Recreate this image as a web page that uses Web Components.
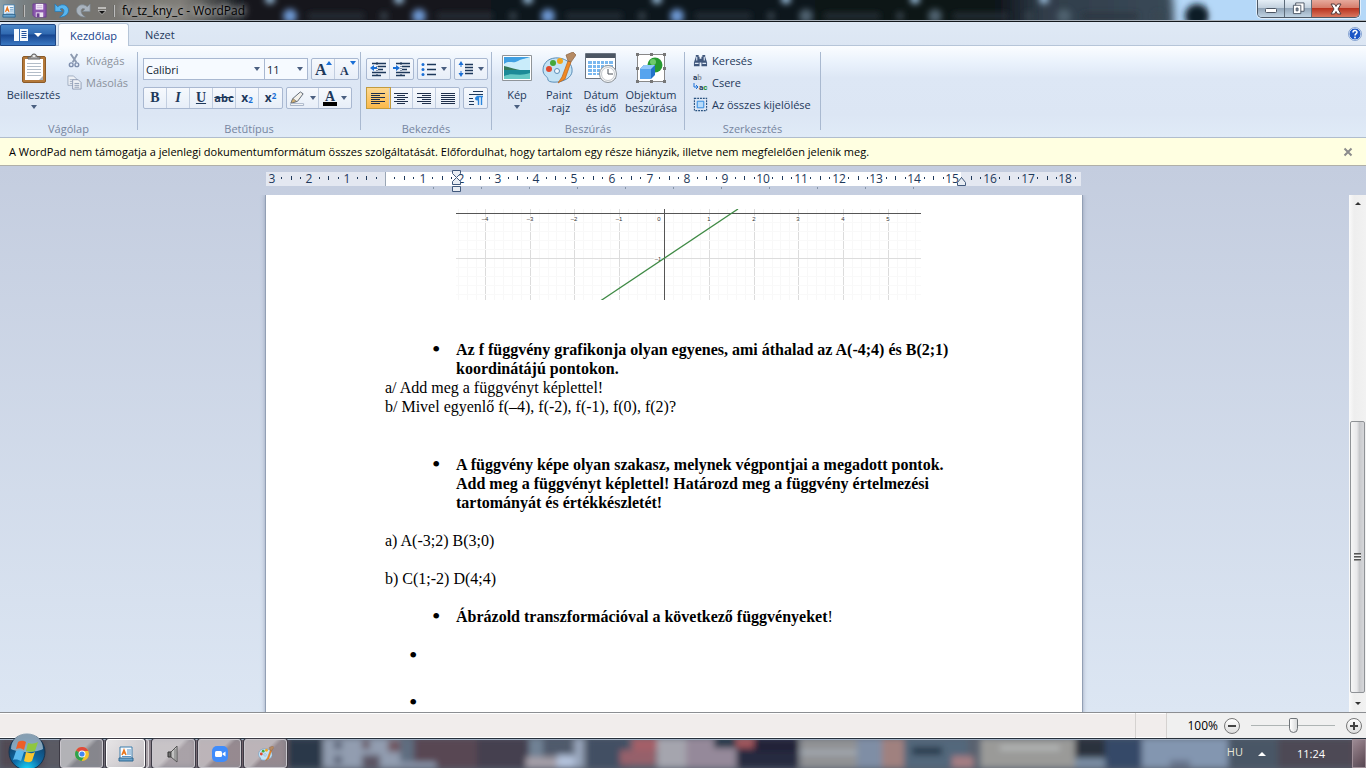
<!DOCTYPE html>
<html lang="hu">
<head>
<meta charset="utf-8">
<title>fv_tz_kny_c - WordPad</title>
<style>
html, body {
	margin: 0;
	height: 100%;
}

body {
	display: flex;
	flex-direction: column;
	overflow: hidden;
	font: 11px/13px "Open Sans", "Noto Sans", sans-serif;
	color: #1e395b;
}

wp-workspace {
	flex: 1;
	min-height: 0;
}

wp-page p, wp-page ul { margin: 0; }
wp-page ul { list-style: none; padding: 0; }
wp-page .spaced { margin-top: 19px; }
wp-page .far { margin-top: 39px; }
wp-page .outer { margin-top: 20px; }
wp-page li {
	display: grid;
	grid-template-columns: 24px 1fr;
	min-height: 19px;
	padding-left: 47px;
}
wp-page li > b { grid-column: 2; }
wp-page li::before { content: "•"; font-size: 24px; grid-row: 1; }
wp-page .spaced li { grid-template-columns: 24px auto 1fr; }
wp-page .outer li { padding-left: 24px; margin-bottom: 28px; }
</style>
</head>
<body>
<wp-titlebar>fv_tz_kny_c - WordPad</wp-titlebar>
<wp-tabs></wp-tabs>
<wp-ribbon></wp-ribbon>
<wp-notice>A WordPad nem támogatja a jelenlegi dokumentumformátum összes szolgáltatását. Előfordulhat, hogy tartalom egy része hiányzik, illetve nem megfelelően jelenik meg.</wp-notice>
<wp-workspace>
	<wp-page>
		<wp-graph></wp-graph>
		<ul>
			<li><b>Az f függvény grafikonja olyan egyenes, ami áthalad az A(-4;4) és B(2;1) koordinátájú pontokon.</b></li>
		</ul>
		<p>a/ Add meg a függvényt képlettel!</p>
		<p>b/ Mivel egyenlő f(–4), f(-2), f(-1), f(0), f(2)?</p>
		<ul class="far">
			<li><b>A függvény képe olyan szakasz, melynek végpontjai a megadott pontok. Add meg a függvényt képlettel! Határozd meg a függvény értelmezési tartományát és értékkészletét!</b></li>
		</ul>
		<p class="spaced">a) A(-3;2) B(3;0)</p>
		<p class="spaced">b) C(1;-2) D(4;4)</p>
		<ul class="spaced">
			<li><b>Ábrázold transzformációval a következő függvényeket</b>!</li>
		</ul>
		<ul class="outer">
			<li></li>
			<li></li>
		</ul>
	</wp-page>
</wp-workspace>
<wp-statusbar></wp-statusbar>
<wp-taskbar></wp-taskbar>

<script>
const icons = {
	app: [16, 16, `<path d="M2 1h12v12H2z" fill="#f7fbff" stroke="#3d7cab"/><path d="M1 12h14v3H1z" fill="#6aa3cc" stroke="#2e6690"/><path d="M4 9l2-5 2 5M5 7h2" fill="none" stroke="#e8771f" stroke-width="1.5"/><path d="M9 4h4M9 6h4M9 8h4M4 10.500h9" stroke="#5a93c4"/>`],
	save: [16, 16, `<path d="M1 1h14v14H3l-2-2z" fill="#8a57ad" stroke="#6d3f92"/><path d="M4 1h8v6H4z" fill="#f6effa"/><path d="M5 3h6M5 5h6" stroke="#c7add8"/><path d="M4 10h8v5H4z" fill="#e9e2ef"/><path d="M5 11h3v4H5z" fill="#6d3f92"/>`],
	undo: [16, 16, `<path d="M1 1v8h8L6.500 6.500C9 5 11 6.500 10.500 9.500 10 12 8 13.500 6 15c6 0 9.500-3 9.500-7.500C15 2 8.500 0 4 4z" fill="#57b5ef" stroke="#2478b4" stroke-width=".8"/>`],
	redo: [16, 16, `<path d="M15 1v8H7l2.500-2.500C7 5 5 6.500 5.500 9.500 6 12 8 13.500 10 15 4 15 .500 12 .500 7.500 1 2 7.500 0 12 4z" fill="#a9b3bd" stroke="#7e8891" stroke-width=".8"/>`],
	more: [8, 8, `<path d="M0 1h8" stroke="#fff"/><path d="M0 3.500h8L4 7.500z" fill="#111" stroke="#eee" stroke-width=".6"/>`],
	arrow: [6, 4, `<path d="M0 0h6L3 4z" fill="#4a5f80"/>`],
	menu: [14, 12, `<path d="M0 0h14v12H0z" fill="#f6fafe"/><path d="M5.500 0v12" stroke="#356aab"/><path d="M7.500 2.500h5M7.500 4.500h5M7.500 6.500h5M7.500 8.500h5" stroke="#23519a"/>`],
	paste: [26, 30, `<rect x="1.500" y="3.500" width="23" height="26" rx="1.500" fill="#b4793a" stroke="#8a5a28"/><path d="M4 6h18v21H4z" fill="#fff"/><path d="M6 10.500h14M6 13.500h14M6 16.500h14M6 19.500h14M6 22.500h14" stroke="#b3bdc8"/><path d="M18 27l4-4v4z" fill="#aab4c0"/><path d="M7 6V4h3c0-4 6-4 6 0h3v2z" fill="#aaa" stroke="#606060"/><circle cx="13" cy="3" r="1" fill="#fff"/>`],
	cut: [16, 16, `<path d="M4 1l6 9M11 1l-5 9" stroke="#8e9bb1" stroke-width="2" fill="none"/><circle cx="4.500" cy="12.500" r="2" fill="none" stroke="#7e8ead" stroke-width="1.500"/><circle cx="10.500" cy="12.500" r="2" fill="none" stroke="#7e8ead" stroke-width="1.500"/>`],
	copy: [16, 16, `<path d="M1 1h6l3 3v7H1z" fill="#eef1f6" stroke="#a1adc1"/><path d="M3 5h4M3 7h3M3 9h3" stroke="#a1adc1"/><path d="M6 5h6l3 3v7H6z" fill="#eef1f6" stroke="#8e9bb3"/><path d="M8 9h5M8 11h5M8 13h5" stroke="#8e9bb3"/>`],
	indentLess: [18, 16, `<path d="M3 2.500h14M9 5.500h8M9 8.500h5M3 11.500h14M3 14.500h9" stroke="#1e395b" stroke-width="1.400"/><path d="M8 1v14" stroke="#1e395b" stroke-dasharray="1 1"/><path d="M1 7l4-3v2h3v2H5v2z" fill="#1a6fd6"/>`],
	indentMore: [18, 16, `<path d="M3 2.500h14M9 5.500h8M9 8.500h5M3 11.500h14M3 14.500h9" stroke="#1e395b" stroke-width="1.400"/><path d="M8 1v14" stroke="#1e395b" stroke-dasharray="1 1"/><path d="M7 7L3 4v2H0v2h3v2z" fill="#1a6fd6"/>`],
	bullets: [16, 16, `<path d="M6 3.500h9M6 8.500h9M6 13.500h9" stroke="#1e395b" stroke-width="1.300"/><circle cx="2" cy="3.500" r="1.500" fill="#1a6fd6"/><circle cx="2" cy="8.500" r="1.500" fill="#1a6fd6"/><circle cx="2" cy="13.500" r="1.500" fill="#1a6fd6"/>`],
	spacing: [16, 16, `<path d="M7 3.500h8M7 6.500h8M7 9.500h8M7 12.500h8" stroke="#1e395b" stroke-width="1.300"/><path d="M3 0l2.500 4h-2v2h-1V4h-2zM3 16l2.500-4h-2v-2h-1v2h-2z" fill="#1a6fd6"/>`],
	left: [16, 16, `<path d="M1 3.500h14M1 5.500h9M1 7.500h14M1 9.500h9M1 11.500h14M1 13.500h9" stroke="#1e2f4b"/>`],
	center: [16, 16, `<path d="M1 3.500h14M4 5.500h8M1 7.500h14M4 9.500h8M1 11.500h14M4 13.500h8" stroke="#1e2f4b"/>`],
	right: [16, 16, `<path d="M1 3.500h14M6 5.500h9M1 7.500h14M6 9.500h9M1 11.500h14M6 13.500h9" stroke="#1e2f4b"/>`],
	justify: [16, 16, `<path d="M1 3.500h14M1 5.500h14M1 7.500h14M1 9.500h14M1 11.500h14M1 13.500h14" stroke="#1e2f4b"/>`],
	para: [16, 16, `<path d="M5 1.500h10M1 4.500h14M1 8.500h4M1 11.500h5M1 14.500h5" stroke="#1e395b" stroke-width="1.200"/><path d="M10 6.500H9a2 2 0 0 0 0 4h1z" fill="#2b86dd"/><path d="M15 6.500H8.500M10.500 6v9M13.500 6v9" fill="none" stroke="#2b86dd" stroke-width="1.400"/>`],
	pen: [18, 16, `<path d="M2 13l2-5 8-7 3 2-6 8z" fill="#f4f2ec" stroke="#5b6470"/><path d="M2 13l2-5 4 3z" fill="#d9b370" stroke="#5b6470" stroke-width=".6"/><path d="M1.500 13.500h14v2h-14z" fill="#fff" stroke="#a3b0c4"/>`],
	picture: [30, 26, `<path d="M.500.500h29v25H.500z" fill="#fff" stroke="#8f9499"/><path d="M2 2h26v22H2z" fill="#3f9fe2"/><path d="M2 9c5-4 9 0 14-3s8-2 12-4v13H2z" fill="#c9ecfa"/><path d="M2 11c5 1 9 3 16 4H2z" fill="#34785a"/><path d="M2 15h26v9H2z" fill="#1c8a97"/><path d="M2 21c8-4 15 1 26-3v6H2z" fill="#66c8c4"/>`],
	paint: [34, 32, `<path d="M17 6C8 5 1 10 1 18c0 6 5 6 5 10 1 4 22 3 24-8 1-8-5-13-13-14z" fill="#c4e3f5" stroke="#5b8eb8"/><circle cx="7" cy="17" r="3" fill="#e0492d"/><circle cx="11" cy="11" r="3" fill="#46a83a"/><circle cx="18" cy="9" r="3" fill="#f2a51c"/><circle cx="15" cy="19" r="2.500" fill="#f1f8fd" stroke="#5b8eb8"/><path d="M16 31l4-6 6-16 3 1-6 17z" fill="#f08a24" stroke="#b8611a" stroke-width=".7"/><path d="M26 9l-2-6 7-3 3 3-5 7z" fill="#b58a63" stroke="#8b6340" stroke-width=".7"/>`],
	date: [32, 32, `<path d="M.500 1.500h30v25H.500z" fill="#fff" stroke="#6b7480"/><path d="M1 2h29v4H1z" fill="#4c5663"/><path d="M3 9h25v14H3z" fill="#7ab8ef"/><path d="M7.500 8v16M11.500 8v16M15.500 8v16M19.500 8v16M23.500 8v16M3 12.500h25M3 16.500h25M3 20.500h25" stroke="#fff"/><circle cx="23" cy="22" r="8.500" fill="#f3f4f5" stroke="#8e949a"/><circle cx="23" cy="22" r="6.500" fill="#fff" stroke="#c5c9cd"/><path d="M23 17v5h5" fill="none" stroke="#4a5058"/>`],
	object: [30, 30, `<path d="M1.500 1.500h27v27h-27z" fill="#fff" stroke="#888"/><circle cx="19" cy="12" r="7.500" fill="#279a31"/><circle cx="17" cy="9" r="3" fill="#6fcb6c"/><path d="M4 16l4-4h11v10l-4 4H4z" fill="#2473c9"/><path d="M4 16h11v10H4z" fill="#57a4ee"/><path d="M4 16l4-4h11l-4 4z" fill="#93c8fa"/><path d="M0 0h3v3H0zM14 0h3v3h-3zM27 0h3v3h-3zM0 14h3v3H0zM27 14h3v3h-3zM0 27h3v3H0zM14 27h3v3h-3zM27 27h3v3h-3z" fill="#777"/>`],
	find: [16, 16, `<path d="M3 2h3v2h1v2h2V4h1V2h3v2l2 6v4H9v-4H7v4H1v-4l2-6z" fill="#40577c"/><path d="M2 11h4M10 11h4M4 4v4M12 4v4" stroke="#dbe6f4" stroke-width="1.200"/>`],
	selectAll: [16, 16, `<path d="M1.500 1.500h13v13h-13z" fill="none" stroke="#27517f" stroke-width="1.200" stroke-dasharray="2 1"/><path d="M4.500 4.500h7v7h-7z" fill="#b7dbfa" stroke="#2a86de"/>`],
	help: [14, 14, `<circle cx="7" cy="7" r="6" fill="#1c56c6" stroke="#e9f2fc"/><circle cx="7" cy="7" r="6.500" fill="none" stroke="#4b76b8" stroke-width=".6"/><path d="M5 5.500C5 3 9 3 9 5.300 9 6.700 7 6.700 7 8.500" fill="none" stroke="#fff" stroke-width="1.500"/><circle cx="7" cy="10.500" r=".9" fill="#fff"/>`],
	close: [10, 10, `<path d="M1.500 1.500l7 7M8.500 1.500l-7 7" stroke="#8c8c8c" stroke-width="2"/>`],
	minimise: [14, 10, `<rect x="1.500" y="4.500" width="11" height="4" rx="1" fill="#fff" stroke="#4b5563"/>`],
	restore: [14, 14, `<path d="M4 1h9v9H4z" fill="#fff" stroke="#4b5563"/><path d="M1.500 3.500h8v9h-8z" fill="#fff" stroke="#4b5563"/><path d="M4.500 6.500h2v3h-2z" fill="#8a99a8" stroke="#4b5563"/>`],
	quit: [14, 12, `<path d="M2 1h3.500L7 3.500 8.500 1H12L9 6l3 5H8.500L7 8.500 5.500 11H2l3-5z" fill="#fff" stroke="#543b3d"/>`],
	orb: [38, 38, `<defs><radialGradient id="o" cx=".5" cy="1" r=".9"><stop offset="0" stop-color="#19dcff"/><stop offset=".45" stop-color="#0f6aa6"/><stop offset="1" stop-color="#123a5e"/></radialGradient></defs><circle cx="19" cy="19" r="18" fill="url(#o)" stroke="#16334f"/><path d="M3 16A16 16 0 0 1 35 16C28 20 10 20 3 16z" fill="#e6f2fa" opacity=".55"/><path d="M10 9c3-2 6-1 8 0l-2 8c-3-2-5-2-8-1z" fill="#ee5f26"/><path d="M20 10c3 1 6 1 10-1l-3 9c-3 1-6 1-9 0z" fill="#8fc63f"/><path d="M8 18c3-1 5-1 8 1l-3 9c-2-1-5-2-8-1z" fill="#5ab9ee"/><path d="M18 19c3 1 6 2 9 0l-3 9c-3 2-6 1-8 0z" fill="#fbc62f"/>`],
	chrome: [16, 16, `<circle cx="8" cy="8" r="7" fill="#f4c32c"/><path d="M8 8L2 4.500A7 7 0 0 1 14.300 5H8z" fill="#dd4b3e"/><path d="M8 8L2 4.500A7 7 0 0 0 7.500 15l3-5z" fill="#2fa04e"/><circle cx="8" cy="8" r="3.500" fill="#fff"/><circle cx="8" cy="8" r="2.600" fill="#4286f3"/>`],
	speaker: [16, 18, `<path d="M2 7h3v5H2z" fill="#707070" stroke="#333"/><path d="M5 7l6-6v16l-6-5z" fill="#c3c3c3" stroke="#555"/><path d="M9 4v11" stroke="#777"/>`],
	zoom: [16, 16, `<rect width="16" height="16" rx="5" fill="#3f8cfb"/><rect x="3" y="5" width="7" height="6" rx="1.500" fill="#fff"/><path d="M10.500 7.500l3-2v5l-3-2z" fill="#fff"/>`]
}

function attach(el, html) {
	el.attachShadow({ mode: 'open' })
	el.shadowRoot.innerHTML = html
}

// <wp-icon name="save" size="16">, size is the drawn width
class WpIcon extends HTMLElement {
	connectedCallback() {
		const [w, h, body] = icons[this.getAttribute('name')]
		const width = this.getAttribute('size') || w
		attach(this, `
<style>
:host { display: inline-flex; flex: none; }
</style>
<svg width="${width}" height="${Math.round(h * width / w)}" viewBox="0 0 ${w} ${h}" aria-hidden="true">${body}</svg>`)
	}
}
customElements.define('wp-icon', WpIcon)

class WpTitlebar extends HTMLElement {
	constructor() {
		super()
		// browser tabs behind the glass
		let tabs = ''
		for (let i = 0; i < 7; i++) {
			const x = 270 + i * 129
			tabs += `<circle cx="${x}" cy="-1" r="5" fill="#9cc0de"/><circle cx="${x + 20}" cy="16" r="7" fill="${i < 4 ? '#6f9ad6' : '#50626f'}"/><path d="M${x + 38} 16h56" stroke="#2b343d" stroke-width="5"/><circle cx="${x + 114}" cy="16" r="4" fill="#3b4650"/>`
		}
		attach(this, `
<style>
:host {
	display: grid;
	flex: none;
	height: 21px;
	overflow: hidden;
	background: #b5d8f8;
	border-bottom: 1px solid #14181d;
	color: #000;
}
.glass, .bar { grid-area: 1 / 1; }
.bar {
	display: flex;
	align-items: center;
	gap: 7px;
	padding-left: 2px;
	padding-right: 6px;
	z-index: 1;
	box-shadow: inset 0 -1px #aab2bb;
}
.sep { width: 1px; height: 12px; background: #6a6a68; border-right: 1px solid #bbb; }
h1 { margin: 0; flex: 1; font: inherit; font-size: 12px; text-shadow: 0 0 6px #ddd, 0 0 8px #ccc; }
button { display: inline-flex; padding: 0; border: 0; background: none; }
.controls {
	display: flex;
	align-self: flex-start;
	height: 17px;
	border: 1px solid #4c5866;
	border-top: 0;
	border-radius: 0 0 5px 5px;
	overflow: hidden;
	box-shadow: 0 0 0 1px #e2effb;
}
.controls button {
	width: 27px;
	align-items: center;
	justify-content: center;
	border-right: 1px solid #5e6c7a;
	background: linear-gradient(#e5eef6, #c3d1de 45%, #93a6b9 50%, #c0d3e2);
}
.controls .quit {
	width: 47px;
	border: 0;
	background: linear-gradient(#e6a99c, #d67d6b 45%, #b93420 50%, #d97860);
}
</style>
<svg class="glass" width="100%" height="21" viewBox="0 0 1366 21" preserveAspectRatio="none" aria-hidden="true">
<defs>
<filter id="b" x="-5%" y="-50%" width="110%" height="200%"><feGaussianBlur stdDeviation="4"/></filter>
<filter id="c" x="-5%" y="-50%" width="110%" height="200%"><feGaussianBlur stdDeviation="3"/></filter>
<linearGradient id="g"><stop offset="0" stop-color="#a3c2d0"/><stop offset=".03" stop-color="#7a8488"/><stop offset=".06" stop-color="#73716d"/><stop offset=".17" stop-color="#7f7d78"/><stop offset=".22" stop-color="#14191f"/><stop offset=".85" stop-color="#0d1218"/><stop offset=".89" stop-color="#303d4a"/><stop offset="1" stop-color="#3a4957"/></linearGradient>
</defs>
<path d="M-20-10h1190q4 4 4 40H-20z" fill="url(#g)" filter="url(#b)"/>
<g filter="url(#c)">${tabs}<circle cx="1197" cy="16" r="12" fill="#0e1a26"/><path d="M1215-9h180v40h-180z" fill="#b5d8f8"/></g>
</svg>
<div class="bar">
<wp-icon name="app" size="14"></wp-icon>
<span class="sep"></span>
<button aria-label="Mentés"><wp-icon name="save" size="15"></wp-icon></button>
<button aria-label="Visszavonás"><wp-icon name="undo" size="15"></wp-icon></button>
<button aria-label="Mégis"><wp-icon name="redo" size="15"></wp-icon></button>
<button aria-label="Testreszabás"><wp-icon name="more"></wp-icon></button>
<span class="sep"></span>
<h1><slot></slot></h1>
<div class="controls">
<button aria-label="Kis méret"><wp-icon name="minimise"></wp-icon></button>
<button aria-label="Előző méret"><wp-icon name="restore" size="13"></wp-icon></button>
<button class="quit" aria-label="Bezárás"><wp-icon name="quit"></wp-icon></button>
</div>
</div>`)
	}
}
customElements.define('wp-titlebar', WpTitlebar)

class WpTabs extends HTMLElement {
	constructor() {
		super()
		attach(this, `
<style>
:host {
	display: flex;
	flex: none;
	align-items: flex-end;
	height: 24px;
	background: linear-gradient(#dfe9f5, #dce6f3);
	box-shadow: inset 0 -1px #b6c5d8;
}
button { font: inherit; color: inherit; border: 0; background: none; padding: 0; }
.file {
	display: flex;
	align-items: center;
	justify-content: center;
	gap: 6px;
	width: 56px;
	height: 22px;
	margin-right: 2px;
	border: 1px solid #1c4584;
	border-radius: 2px 2px 0 0;
	background: linear-gradient(#4a86c8, #2f68b0 45%, #174690 50%, #3a78c2);
}
.file i { border: 4px solid transparent; border-top-color: #fff; border-bottom: 0; }
.tab { height: 23px; padding: 0 16px; }
.on {
	width: 71px;
	padding: 0;
	background: #fcfdff;
	border: 1px solid #b6c5d8;
	border-bottom: 0;
	border-radius: 3px 3px 0 0;
	color: #15428b;
}
.help { margin-left: auto; align-self: center; margin-right: 4px; display: flex; }
</style>
<button class="file" aria-label="WordPad menü"><wp-icon name="menu"></wp-icon><i></i></button>
<button class="tab on">Kezdőlap</button>
<button class="tab">Nézet</button>
<button class="help" aria-label="Súgó"><wp-icon name="help"></wp-icon></button>`)
	}
}
customElements.define('wp-tabs', WpTabs)

// labelled group of ribbon commands
class WpGroup extends HTMLElement {
	constructor() {
		super()
		attach(this, `
<style>
:host {
	display: flex;
	flex-direction: column;
	box-sizing: border-box;
	flex: none;
	padding-right: 1px;
	background: linear-gradient(#a9b9d0, #a9b9d0) right 6px / 1px 78px no-repeat;
}
.body { flex: 1; min-height: 0; }
.label { text-align: center; color: #76859f; line-height: 17px; }
</style>
<div class="body"><slot></slot></div>
<div class="label"></div>`)
	}

	connectedCallback() {
		this.shadowRoot.querySelector('.label').textContent = this.getAttribute('label')
	}
}
customElements.define('wp-group', WpGroup)

// picture above, caption below
class WpBigButton extends HTMLElement {
	connectedCallback() {
		attach(this, `
<style>
:host { display: flex; justify-content: center; padding-top: 6px; }
button {
	display: flex;
	flex-direction: column;
	align-items: center;
	padding: 0;
	border: 0;
	background: none;
	font: inherit;
	color: inherit;
	text-align: center;
}
.pic { display: flex; align-items: center; height: 32px; margin-bottom: 4px; }
.drop { margin-top: 4px; }
</style>
<button><span class="pic"><wp-icon name="${this.getAttribute('icon')}"></wp-icon></span><slot></slot>${this.hasAttribute('drop') ? '<wp-icon class="drop" name="arrow"></wp-icon>' : ''}</button>`)
	}
}
customElements.define('wp-big-button', WpBigButton)

class WpRowButton extends HTMLElement {
	connectedCallback() {
		const icon = this.getAttribute('icon')
		attach(this, `
<style>
:host { display: block; }
button {
	display: flex;
	align-items: center;
	gap: 4px;
	height: 22px;
	padding: 0;
	border: 0;
	background: none;
	font: inherit;
	color: inherit;
	white-space: nowrap;
}
button:disabled { color: #8b929c; }
</style>
<button${this.hasAttribute('off') ? ' disabled' : ''}>${icon ? `<wp-icon name="${icon}" size="15"></wp-icon>` : '<slot name="icon"></slot>'}<slot></slot></button>`)
	}
}
customElements.define('wp-row-button', WpRowButton)

class WpRibbon extends HTMLElement {
	constructor() {
		super()
		attach(this, `
<style>
:host {
	display: flex;
	flex: none;
	height: 91px;
	background: linear-gradient(#fbfdff, #eaf2fc 18%, #dde7f5 35%, #dce6f4 75%, #e0ebf7);
	border-bottom: 1px solid #b0bdcd;
}
.clip { width: 138px; }
.font { width: 223px; }
.para { width: 131px; }
.insert { width: 193px; }
.edit { width: 136px; }
.split { display: grid; grid-template-columns: 67px 1fr; }
.rows { padding: 3px 0 0 8px; }
.split .rows { padding-left: 0; }
.lines { display: flex; flex-direction: column; gap: 7px; padding: 12px 0 0 5px; }
.line { display: flex; gap: 3px; }
.big { display: grid; grid-template-columns: 40px 44px 40px 60px; padding-left: 5px; }
.set {
	display: flex;
	box-sizing: border-box;
	height: 22px;
	border: 1px solid #a9b8d1;
	border-radius: 2px;
	background: linear-gradient(#f6f9fd, #e7eef8);
}
.set button {
	display: flex;
	align-items: center;
	justify-content: center;
	gap: 4px;
	width: 23px;
	padding: 0;
	border: 0;
	border-right: 1px solid #c2cee0;
	background: none;
	color: #1e395b;
	font: bold 14px/16px "Liberation Serif", serif;
}
.set button:last-child { border-right: 0; }
.set .wide { width: 32px; }
.set .on { background: linear-gradient(#fdd890, #fbb94a); box-shadow: 0 0 0 1px #c29b3f; }
.combo { display: grid; align-items: center; }
.combo + .combo { margin-left: -4px; }
.combo > * { grid-area: 1 / 1; }
.combo wp-icon { justify-self: end; margin-right: 5px; pointer-events: none; }
select {
	appearance: none;
	box-sizing: border-box;
	width: 122px;
	height: 22px;
	padding: 0 2px;
	border: 1px solid #a9b8d1;
	border-radius: 0;
	background: #f6faff;
	font: inherit;
	color: #111f33;
}
.size { width: 44px; }
.set .small { font: bold 11px/16px "Open Sans", sans-serif; }
.set .script { font: bold 12px/16px "Open Sans", sans-serif; gap: 0; }
.script small { color: #1a6fd6; font-size: 8px; }
.low { align-self: flex-end; }
.high { align-self: flex-start; }
.colour { line-height: 14px; border-bottom: 4px solid #000; padding: 0 2px; height: 12px; }
.replace { font: bold 8px Roboto, sans-serif; }
</style>
<wp-group class="clip" label="Vágólap">
	<div class="split">
		<wp-big-button icon="paste" drop>Beillesztés</wp-big-button>
		<div class="rows">
			<wp-row-button icon="cut" off>Kivágás</wp-row-button>
			<wp-row-button icon="copy" off>Másolás</wp-row-button>
		</div>
	</div>
</wp-group>
<wp-group class="font" label="Betűtípus">
	<div class="lines">
		<div class="line">
			<div class="combo"><select aria-label="Betűtípus"><option>Calibri</option></select><wp-icon name="arrow"></wp-icon></div>
			<div class="combo"><select class="size" aria-label="Betűméret"><option>11</option></select><wp-icon name="arrow"></wp-icon></div>
			<div class="set"><button aria-label="Betűméret növelése"><svg width="18" height="18" viewBox="0 0 18 18"><text x="1" y="15" font-size="16" fill="#1e395b">A</text><path d="M12 5h6l-3-4z" fill="#1a6fd6"/></svg></button><button aria-label="Betűméret csökkentése"><svg width="18" height="18" viewBox="0 0 18 18"><text x="2" y="15" font-size="12" fill="#1e395b">A</text><path d="M12 1h6l-3 4z" fill="#1a6fd6"/></svg></button></div>
		</div>
		<div class="line">
			<div class="set">
				<button aria-label="Félkövér">B</button>
				<button aria-label="Dőlt"><i>I</i></button>
				<button aria-label="Aláhúzott"><u>U</u></button>
				<button aria-label="Áthúzott" class="small"><s>abc</s></button>
				<button aria-label="Alsó index" class="script">x<small class="low">2</small></button>
				<button aria-label="Felső index" class="script">x<small class="high">2</small></button>
			</div>
			<div class="set">
				<button class="wide" aria-label="Kiemelés színe"><wp-icon name="pen" size="17"></wp-icon><wp-icon name="arrow"></wp-icon></button>
				<button class="wide" aria-label="Szövegszín"><span class="colour">A</span><wp-icon name="arrow"></wp-icon></button>
			</div>
		</div>
	</div>
</wp-group>
<wp-group class="para" label="Bekezdés">
	<div class="lines">
		<div class="line">
			<div class="set"><button aria-label="Behúzás csökkentése"><wp-icon name="indentLess"></wp-icon></button><button aria-label="Behúzás növelése"><wp-icon name="indentMore"></wp-icon></button></div>
			<div class="set"><button class="wide" aria-label="Felsorolás"><wp-icon name="bullets"></wp-icon><wp-icon name="arrow"></wp-icon></button></div>
			<div class="set"><button class="wide" aria-label="Sorköz"><wp-icon name="spacing"></wp-icon><wp-icon name="arrow"></wp-icon></button></div>
		</div>
		<div class="line">
			<div class="set">
				<button class="on" aria-label="Balra"><wp-icon name="left"></wp-icon></button>
				<button aria-label="Középre"><wp-icon name="center"></wp-icon></button>
				<button aria-label="Jobbra"><wp-icon name="right"></wp-icon></button>
				<button aria-label="Sorkizárt"><wp-icon name="justify"></wp-icon></button>
			</div>
			<div class="set"><button aria-label="Bekezdés"><wp-icon name="para"></wp-icon></button></div>
		</div>
	</div>
</wp-group>
<wp-group class="insert" label="Beszúrás">
	<div class="big">
		<wp-big-button icon="picture" drop>Kép</wp-big-button>
		<wp-big-button icon="paint"><span>Paint<br>-rajz</span></wp-big-button>
		<wp-big-button icon="date"><span>Dátum<br>és idő</span></wp-big-button>
		<wp-big-button icon="object"><span>Objektum<br>beszúrása</span></wp-big-button>
	</div>
</wp-group>
<wp-group class="edit" label="Szerkesztés">
	<div class="rows">
		<wp-row-button icon="find">Keresés</wp-row-button>
		<wp-row-button><svg class="replace" slot="icon" width="15" height="22" viewBox="0 0 15 22" aria-hidden="true"><text x="0" y="9" fill="#1e395b">a<tspan fill="#8d949d">b</tspan></text><text x="6" y="19" fill="#1e395b">a<tspan fill="#188a2b">c</tspan></text><path d="M1 12v4h4M3 14l2 2-2 2" fill="none" stroke="#1a6fd6"/></svg>Csere</wp-row-button>
		<wp-row-button icon="selectAll">Az összes kijelölése</wp-row-button>
	</div>
</wp-group>`)
	}
}
customElements.define('wp-ribbon', WpRibbon)

class WpNotice extends HTMLElement {
	constructor() {
		super()
		attach(this, `
<style>
:host {
	display: flex;
	flex: none;
	align-items: center;
	justify-content: space-between;
	height: 27px;
	padding: 0 13px 0 9px;
	background: #ffffe1;
	border-bottom: 1px solid #b0b0a8;
	color: #000;
}
button { display: flex; padding: 0; border: 0; background: none; }
</style>
<span><slot></slot></span>
<button aria-label="Bezárás"><wp-icon name="close"></wp-icon></button>`)
	}
}
customElements.define('wp-notice', WpNotice)

// centimetre ruler, zero at the left page margin
class WpRuler extends HTMLElement {
	constructor() {
		super()
		const cm = 37.8
		const zero = 119
		let marks = ''
		for (let q = -12; q <= 73; q++) {
			const x = Math.round(zero + q * cm / 4)
			if (q === 0 || x > 814) continue
			if (q % 4 === 0) {
				marks += `<text x="${x}" y="17">${Math.abs(q / 4)}</text>`
			} else if (q % 2 === 0) {
				marks += `<path d="M${x} 10h1v4h-1z"/>`
			} else {
				marks += `<path d="M${x} 11h1v2h-1z"/>`
			}
		}
		for (let x = zero + 48; x < 670; x += 48) marks += `<path d="M${x} 21h1v2h-1z" fill="#8594a8"/>`
		attach(this, `
<style>
:host { display: flex; justify-content: center; }
svg { font-size: 12px; }
</style>
<svg width="816" height="29" viewBox="0 0 816 29">
<path d="M0 6h815v14H0z" fill="#e4e8f1"/>
<path d="M120 6h575v14H120z" fill="#fff"/>
<path d="M119 6h1v14h-1z" fill="#9aa6b5"/>
<g fill="#1e395b" text-anchor="middle">${marks}</g>
<g fill="#e9edf3" stroke="#41597c">
<path d="M186.500 4.500h8v3l-4 4-4-4z"/>
<path d="M186.500 18.500v-3l4-4 4 4v3z"/>
<path d="M186.500 20.500h8v5h-8z"/>
<path d="M691.500 19.500v-3l4-5 4 5v3z"/>
</g>
</svg>`)
	}
}
customElements.define('wp-ruler', WpRuler)

class WpWorkspace extends HTMLElement {
	constructor() {
		super()
		attach(this, `
<style>
:host {
	display: grid;
	grid-template-columns: minmax(0, 1fr) 17px;
	grid-template-rows: 29px minmax(0, 1fr);
	overflow: hidden;
	background: linear-gradient(#c4cddf, #dce6f3);
}
wp-ruler { grid-area: 1 / 1; padding-right: 1px; }
.view {
	grid-area: 2 / 1;
	display: flex;
	align-items: flex-start;
	justify-content: center;
	padding-right: 1px;
	overflow: hidden;
}
wp-scrollbar { grid-area: 2 / 2; }
</style>
<wp-ruler></wp-ruler>
<div class="view"><slot></slot></div>
<wp-scrollbar></wp-scrollbar>`)
	}
}
customElements.define('wp-workspace', WpWorkspace)

class WpScrollbar extends HTMLElement {
	constructor() {
		super()
		attach(this, `
<style>
:host { display: flex; flex-direction: column; background: linear-gradient(90deg, #fafafa, #eee 30%, #f2f2f2); }
button { display: flex; height: 17px; flex: none; padding: 0; border: 0; background: none; align-items: center; justify-content: center; }
.up { border: 3px solid transparent; border-bottom-color: #333; border-top: 0; }
.down { border: 3px solid transparent; border-top-color: #333; border-bottom: 0; }
.before { flex: 209; }
.after { flex: 2; }
.thumb {
	flex: 271;
	display: flex;
	align-items: center;
	justify-content: center;
	margin: 0 1px;
	border: 1px solid #8f9296;
	border-radius: 2px;
	box-sizing: border-box;
	background: linear-gradient(90deg, #f6f6f6, #e8e8ea 45%, #c8c9cc 65%, #d6d7da);
}
.grip { width: 7px; height: 8px; background: repeating-linear-gradient(#555 0 1px, #999 1px 2px, #f3f3f3 2px 3px); }
</style>
<button aria-label="Fel"><i class="up"></i></button>
<div class="before"></div>
<div class="thumb"><div class="grip"></div></div>
<div class="after"></div>
<button aria-label="Le"><i class="down"></i></button>`)
	}
}
customElements.define('wp-scrollbar', WpScrollbar)

class WpPage extends HTMLElement {
	constructor() {
		super()
		attach(this, `
<style>
:host {
	display: block;
	box-sizing: border-box;
	flex: none;
	width: 816px;
	padding: 14px 120px 0 119px;
	background: #fff;
	color: #000;
	font: 16px/19px "Liberation Serif", serif;
	box-shadow: 0 0 0 1px #929fb4, 0 0 5px #7d8ba5;
}
::slotted(wp-graph) { margin: 0 0 40px 71px; }
</style>
<slot></slot>`)
	}
}
customElements.define('wp-page', WpPage)

// y = 2/3 x - 1 near the x axis
class WpGraph extends HTMLElement {
	constructor() {
		super()
		const unit = 44.8
		const ox = 208
		let grid = ''
		let labels = ''
		for (let i = -23; i <= 28; i++) {
			const x = Math.round(ox + i * unit / 5)
			grid += `<path d="M${x} 0h1v91h-1z" fill="${i % 5 ? '#f8f8f8' : '#dcdcdc'}"/>`
			if (i % 5 === 0 && i) labels += `<text x="${x}" y="12">${i < 0 ? '–' : ''}${Math.abs(i / 5)}</text>`
		}
		for (let i = 1; i <= 9; i++) {
			const y = Math.round(4 + i * unit / 5)
			grid += `<path d="M0 ${y}h465v1H0z" fill="${i % 5 ? '#f9f9f9' : '#dcdcdc'}"/>`
		}
		attach(this, `
<style>
:host { display: block; height: 91px; }
svg { display: block; font: 6px "Liberation Sans", sans-serif; }
</style>
<svg width="465" height="91" viewBox="0 0 465 91">
${grid}
<path d="M0 4h465v1H0zM208 0h1v91h-1z" fill="#555"/>
<g fill="#333" stroke="#fff" stroke-width="2" paint-order="stroke" text-anchor="middle">${labels}<text x="203" y="12">0</text><text x="202" y="52">–1</text></g>
<path d="M145 91.500L282 0" stroke="#3f8a45" stroke-width="1.300"/>
</svg>`)
	}
}
customElements.define('wp-graph', WpGraph)

class WpStatusbar extends HTMLElement {
	constructor() {
		super()
		attach(this, `
<style>
:host {
	display: flex;
	flex: none;
	justify-content: flex-end;
	height: 25px;
	border-top: 1px solid #8c8e92;
	box-shadow: inset 0 1px #fff, inset 0 -1px #fff;
	background: #f1edec;
	color: #000;
}
.cell { width: 30px; border-left: 1px solid #d5d2d0; }
.zoom {
	display: flex;
	align-items: center;
	gap: 6px;
	padding: 0 4px 0 20px;
	border-left: 1px solid #d5d2d0;
	background: #f0f0f0;
}
label { font-size: 12px; }
button {
	display: grid;
	place-items: center;
	width: 16px;
	height: 16px;
	padding: 0;
	border: 1px solid #777;
	border-radius: 50%;
	background: linear-gradient(#fff, #ddd);
}
input {
	appearance: none;
	width: 84px;
	height: 20px;
	margin: 0 5px;
	background: linear-gradient(#aeb4b4, #aeb4b4) center / 100% 1px no-repeat;
}
input::-webkit-slider-thumb {
	appearance: none;
	width: 9px;
	height: 15px;
	border: 1px solid #6e7377;
	border-radius: 2px 2px 5px 5px;
	background: linear-gradient(90deg, #fff, #d8dadb);
}
</style>
<span class="cell"></span>
<div class="zoom">
<label for="zoom">100%</label>
<button aria-label="Kicsinyítés"><svg width="8" height="8"><path d="M0 3h8v2H0z" fill="#444"/></svg></button>
<input id="zoom" type="range" min="0" max="100" value="50">
<button aria-label="Nagyítás"><svg width="8" height="8"><path d="M0 3h8v2H0zM3 0h2v8H3z" fill="#444"/></svg></button>
</div>`)
	}
}
customElements.define('wp-statusbar', WpStatusbar)

class WpTaskbar extends HTMLElement {
	constructor() {
		super()
		// blocks of the wallpaper seen through the glass: x, y, width, height, colour
		const blocks = [
			[0, 0, 45, 30, '#514a52'], [45, 0, 60, 30, '#5a5a64'], [105, 0, 90, 30, '#8a8088'], [195, 0, 92, 30, '#705f68'],
			[287, 0, 36, 30, '#2b3749'], [323, 0, 77, 30, '#929db0'], [334, 3, 8, 8, '#596174'], [334, 18, 8, 8, '#596174'],
			[362, 2, 8, 9, '#6b5b68'], [362, 17, 18, 13, '#5c5464'], [388, 2, 14, 12, '#715761'], [400, 0, 14, 30, '#5f6d80'],
			[414, 0, 63, 30, '#594652'], [400, 24, 36, 6, '#8b96ab'], [477, 0, 52, 30, '#443f4f'], [529, 0, 14, 30, '#718295'],
			[543, 0, 28, 16, '#505a6c'], [526, 19, 35, 11, '#a59fa8'], [557, 17, 26, 13, '#b3c2dc'], [574, 0, 10, 30, '#97a5bb'],
			[587, 0, 42, 30, '#425064'], [632, 0, 26, 12, '#a55f67'], [620, 12, 36, 15, '#96606b'], [657, 0, 29, 30, '#a5a5ae'],
			[686, 0, 50, 30, '#95899a'], [714, 0, 22, 10, '#26374a'], [736, 0, 18, 10, '#a2565c'], [737, 10, 61, 20, '#252a40'],
			[754, 0, 44, 14, '#202238'], [800, 0, 57, 30, '#919294'], [800, 13, 57, 3, '#abb5c0'], [857, 0, 25, 30, '#7f8ea5'],
			[882, 0, 22, 30, '#a0817f'], [904, 0, 64, 30, '#53687c'], [912, 9, 30, 8, '#263b4c'], [952, 18, 22, 12, '#a57e83'],
			[980, 0, 95, 30, '#9a9a98'], [1000, 8, 60, 4, '#b9bdbd'], [1075, 0, 35, 20, '#29313e'], [1075, 20, 35, 10, '#7a8ea4'],
			[1105, 0, 37, 30, '#354a67'], [1142, 0, 86, 30, '#8396b0'], [1170, 22, 20, 8, '#67758c'], [1228, 0, 50, 30, '#4a5666'],
			[1278, 0, 75, 30, '#4d4955'], [1353, 0, 20, 30, '#5d4c56']
		]
		const rects = blocks.map(([x, y, w, h, c]) => `<rect x="${x}" y="${y}" width="${w}" height="${h}" fill="${c}"/>`).join('')
		attach(this, `
<style>
:host {
	display: grid;
	flex: none;
	height: 30px;
	color: #fff;
	position: relative;
}
.glass, .bar { grid-area: 1 / 1; min-width: 0; }
.bar {
	display: flex;
	gap: 3px;
	padding-left: 60px;
	box-sizing: border-box;
	border-top: 1px solid #27303b;
	box-shadow: inset 0 1px #a5b4c6;
	z-index: 1;
}
/* the orb rises over the status bar */
.orb { position: absolute; left: 8px; bottom: -3px; z-index: 2; }
button { display: flex; padding: 0; border: 0; background: none; align-items: center; justify-content: center; }
.task {
	box-sizing: border-box;
	width: 43px;
	border: 1px solid #c9c6cc;
	border-radius: 3px;
	box-shadow: 0 0 0 1px #3c3a44;
	background: linear-gradient(135deg, #ffffff88 45%, #ffffff44 55%);
}
.on { width: 39px; background: linear-gradient(135deg, #ffffffcc, #e0dee0aa); border-color: #fff; }
.stack { display: flex; gap: 1px; width: 43px; }
.stack i { width: 3px; border: 1px solid #d9d6da; border-left: 0; border-radius: 0 3px 3px 0; background: #ffffff44; box-sizing: border-box; }
.tray { display: flex; align-items: center; margin-left: auto; gap: 15px; }
.lang { color: #e8e6d8; padding-bottom: 4px; }
.tray i { border: 4px solid transparent; border-bottom-color: #fff; border-top: 0; }
time { font-size: 11px; margin-left: 16px; }
.peek { box-sizing: border-box; width: 14px; height: 29px; margin-left: 12px; border: 1px solid #a08f98; background: linear-gradient(135deg, #bfa9b1aa, #4d3a4466); }
</style>
<svg class="glass" width="100%" height="30" viewBox="0 0 1366 30" preserveAspectRatio="none" aria-hidden="true">
<defs><filter id="s" x="0" y="0" width="100%" height="100%"><feGaussianBlur stdDeviation="3"/></filter></defs>
<rect width="1366" height="30" fill="#59616f"/>
<g filter="url(#s)">${rects}</g>
</svg>
<button class="orb" aria-label="Start"><wp-icon name="orb"></wp-icon></button>
<div class="bar">
<button class="task" aria-label="Chrome"><wp-icon name="chrome"></wp-icon></button>
<div class="stack"><button class="task on" aria-label="WordPad"><wp-icon name="app"></wp-icon></button><i></i></div>
<button class="task" aria-label="Hangerő"><wp-icon name="speaker"></wp-icon></button>
<button class="task" aria-label="Zoom"><wp-icon name="zoom"></wp-icon></button>
<button class="task" aria-label="Paint"><wp-icon name="paint" size="16"></wp-icon></button>
<div class="tray">
<span class="lang">HU</span>
<i></i>
<time>11:24</time>
<button class="peek" aria-label="Asztal megjelenítése"></button>
</div>
</div>`)
	}
}
customElements.define('wp-taskbar', WpTaskbar)
</script>
</body>
</html>
